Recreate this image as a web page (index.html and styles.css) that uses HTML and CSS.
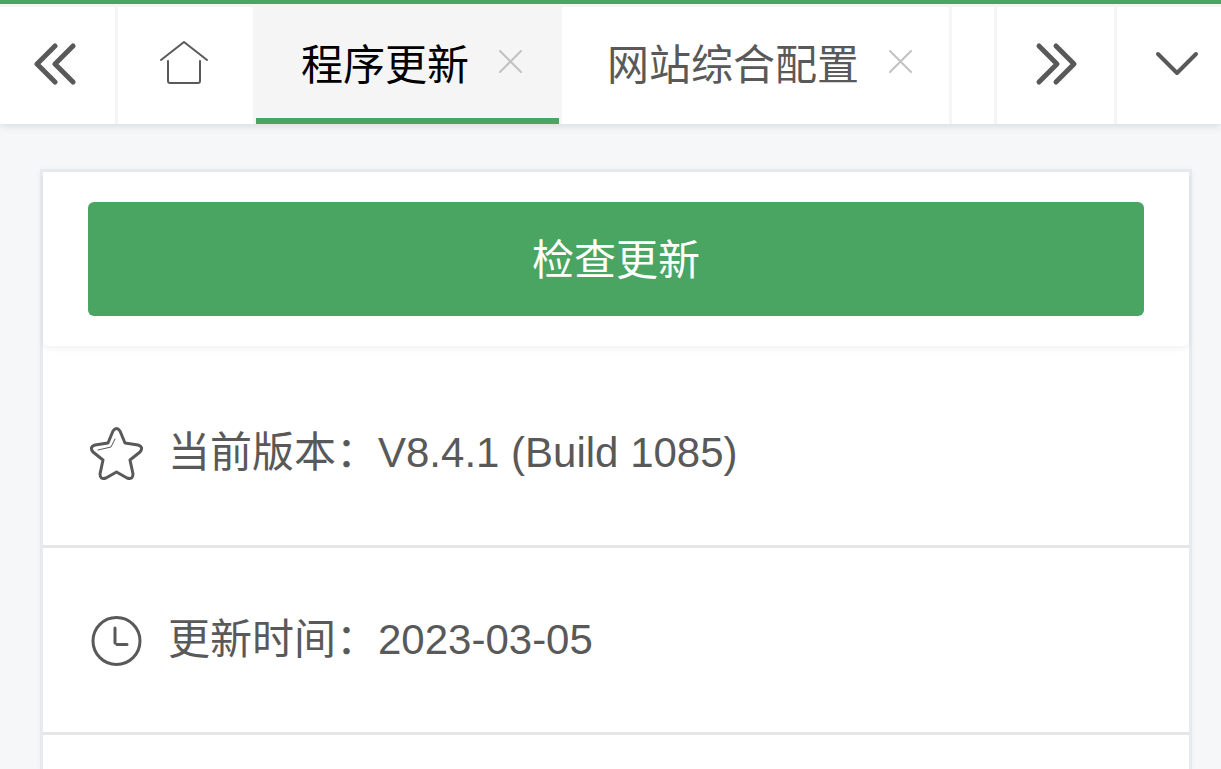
FILE: index.html
```html
<!DOCTYPE html>
<html lang="zh-CN">

<head>
  <meta charset="UTF-8">
  <meta name="viewport" content="width=device-width, initial-scale=1.0">
  <title>程序更新</title>
  <link rel="stylesheet" href="styles.css">
</head>

<body>
  <nav class="tabs-bar">
    <button class="bar-btn prev" type="button" aria-label="向左">
      <svg width="44" height="44" viewBox="0 0 44 44"><path d="M21 4 3 22 21 40M39 4 21 22 39 40"/></svg>
    </button>
    <ul class="tabs">
      <li class="tab home">
        <button class="tab-icon" type="button" aria-label="首页">
          <svg width="48" height="48" viewBox="0 0 48 48"><path d="M1 22 24 4 47 22M8 23V43Q8 45 10 45H38Q40 45 40 43V23"/></svg>
        </button>
      </li>
      <li class="tab active">
        <button class="tab-link" type="button">程序更新</button>
        <button class="tab-icon close" type="button" aria-label="关闭">
          <svg width="24" height="24" viewBox="0 0 24 24"><path d="M1 1 22 22M22 1 1 22"/></svg>
        </button>
      </li>
      <li class="tab">
        <button class="tab-link" type="button">网站综合配置</button>
        <button class="tab-icon close" type="button" aria-label="关闭">
          <svg width="24" height="24" viewBox="0 0 24 24"><path d="M1 1 22 22M22 1 1 22"/></svg>
        </button>
      </li>
      <li class="tab-end"></li>
    </ul>
    <button class="bar-btn next" type="button" aria-label="向右">
      <svg width="44" height="44" viewBox="0 0 44 44"><path d="M4 4 22 22 4 40M21 4 39 22 21 40"/></svg>
    </button>
    <button class="bar-btn more" type="button" aria-label="更多">
      <svg width="44" height="44" viewBox="0 0 44 44"><path d="M3 12 22 31 41 12"/></svg>
    </button>
  </nav>

  <main class="content">
    <div class="card">
      <div class="card-header">
        <button class="btn-update" type="button">检查更新</button>
      </div>
      <ul class="info-list">
        <li class="info-item">
          <svg class="info-icon" width="54" height="54" viewBox="0 0 54 54">
            <path d="M24 5Q27.500 0 31 5L36 17 49 19Q55 21 51 26L41 34 44 48Q44 54 38 52L27.500 46 17 52Q11 54 11 48L14 34 4 26Q0 21 6 19L19 17Z"/>
            <path class="thin" d="M26 13 22 21 9 24"/>
          </svg>
          <span>当前版本：V8.4.1 (Build 1085)</span>
        </li>
        <li class="info-item">
          <svg class="info-icon" width="54" height="54" viewBox="0 0 54 54">
            <circle cx="27.500" cy="28" r="23.500"/>
            <path d="M26 15V30M28 31.500H38"/>
          </svg>
          <span>更新时间：2023-03-05</span>
        </li>
      </ul>
    </div>
  </main>
</body>

</html>
```

FILE: styles.css
```css
* {
  box-sizing: border-box;
  margin: 0;
  padding: 0;
}

body {
  min-height: 100vh;
  display: flex;
  flex-direction: column;
  font-family: "Liberation Sans", "Noto Sans CJK SC", sans-serif;
  font-size: 42px;
  line-height: 60px;
  color: #595959;
  background: #f5f7f9;
}

ul {
  list-style: none;
}

button {
  border: none;
  background: none;
  font: inherit;
  color: inherit;
  cursor: pointer;
}

svg {
  display: block;
  fill: none;
  stroke: currentColor;
  stroke-linecap: round;
  stroke-linejoin: round;
}

/* top tabs */
.tabs-bar {
  display: flex;
  height: 124px;
  border-top: 4px solid #4aa562;
  background: #fff;
  box-shadow: inset 0 3px 0 #f5f5f5, 0 2px 8px rgba(0, 0, 0, 0.12);
}

.bar-btn {
  flex: none;
  display: flex;
  align-items: center;
}

.bar-btn svg {
  stroke-width: 5;
}

.prev {
  padding: 0 37px 0 34px;
  border-right: 3px solid #f5f5f5;
}

.next {
  padding: 0 35px 0 38px;
  border-left: 3px solid #f5f5f5;
}

.more {
  padding: 0 22px 0 38px;
  border-left: 3px solid #f5f5f5;
}

.more svg {
  stroke-width: 4;
}

.tabs {
  flex: 1;
  display: flex;
  overflow: hidden;
}

.tab {
  flex: none;
  display: flex;
  align-items: center;
  gap: 30px;
  padding: 0 36px 0 45px;
}

.tab-link {
  padding-top: 4px;
}

.tab-icon {
  padding-bottom: 4px;
}

.tab-icon svg {
  stroke-width: 2;
}

.close {
  color: #c2c2c2;
}

.home {
  padding: 0 45px 0 42px;
}

.active {
  position: relative;
  color: #000;
  background: #f5f5f5;
  border: solid #f5f5f5;
  border-width: 0 3px;
}

.active::after {
  content: "";
  position: absolute;
  left: 0;
  right: 0;
  bottom: 0;
  height: 6px;
  background: #4aa562;
}

.tab-end {
  border-left: 3px solid #f5f5f5;
}

/* page body */
.content {
  flex: 1;
  display: flex;
  padding: 45px 29px 0 40px;
}

.card {
  flex: 1;
  border: 3px solid #e6e9f0;
  border-bottom: none;
  background: #fff;
  box-shadow: 0 0 6px rgba(0, 0, 0, 0.04);
}

.card-header {
  padding: 30px 45px;
  border-radius: 0 0 6px 6px;
  box-shadow: 0 3px 6px rgba(0, 0, 0, 0.05);
}

.btn-update {
  display: block;
  width: 100%;
  height: 114px;
  padding-top: 4px;
  border-radius: 6px;
  color: #fff;
  background: #4aa562;
}

.info-list {
  padding-top: 15px;
}

.info-item {
  display: flex;
  align-items: center;
  gap: 25px;
  padding: 62px 46px;
  border-bottom: 3px solid #e6e6e6;
}

.info-icon {
  flex: none;
  stroke-width: 3;
}

.thin {
  stroke-width: 1;
}
```
